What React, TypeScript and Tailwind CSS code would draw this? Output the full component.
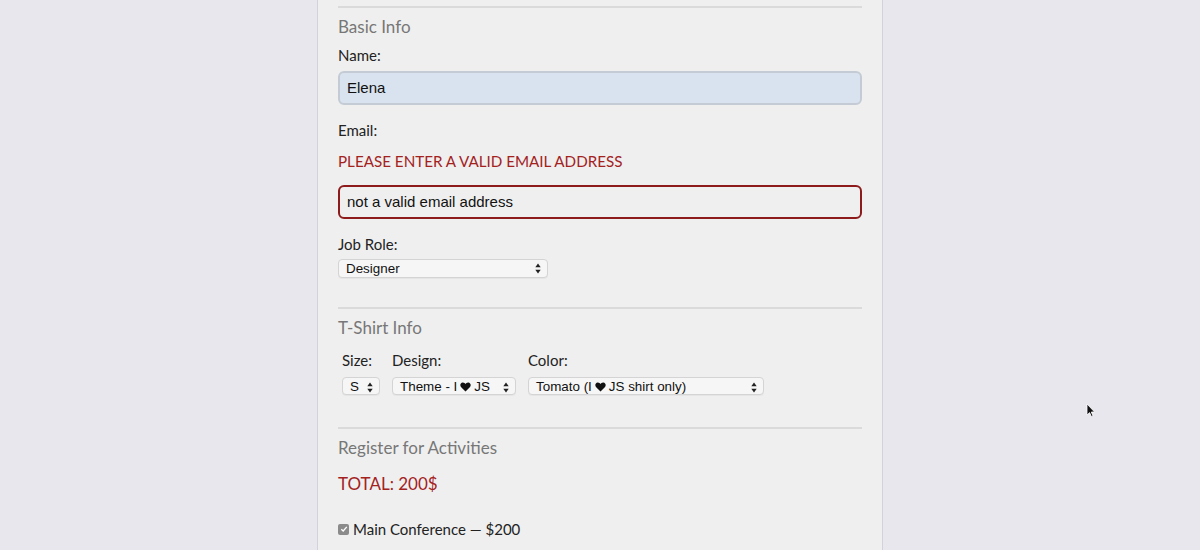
const sans = { fontFamily: 'Lato, "Open Sans", sans-serif' }

function Arrows() {
  return (
    <svg width="6" height="11" viewBox="0 0 6 11" className="shrink-0">
      <path d="M3 0.5 L5.7 4.3 L0.3 4.3 Z" fill="#222" />
      <path d="M3 10.5 L5.7 6.7 L0.3 6.7 Z" fill="#222" />
    </svg>
  )
}

function Heart() {
  return (
    <svg width="11" height="10" viewBox="0 0 11 10" className="mx-[3px] inline-block align-[-1px]">
      <path d="M5.5 9.6 L1.2 5.2 C-0.4 3.6 0.2 0.6 2.7 0.4 C4 0.3 5 1.1 5.5 2.1 C6 1.1 7 0.3 8.3 0.4 C10.8 0.6 11.4 3.6 9.8 5.2 Z" fill="#111" />
    </svg>
  )
}

function FakeSelect({ children, className }: { children: React.ReactNode; className: string }) {
  return (
    <div
      className={`flex items-center justify-between rounded-[4px] border border-[#d4d4d4] bg-[#f6f6f6] pr-[6px] text-[13.4px] leading-none text-[#111] shadow-[0_1px_0_rgba(0,0,0,0.04)] ${className}`}
      style={{ fontFamily: '"Liberation Sans", Arial, sans-serif' }}
    >
      <span className="whitespace-nowrap">{children}</span>
      <Arrows />
    </div>
  )
}

function Rule({ className = '' }: { className?: string }) {
  return <div className={`h-[2px] bg-[#dadada] ${className}`} />
}

function Title({ children, className = '' }: { children: string; className?: string }) {
  return <h2 className={`text-[17px] leading-[20px] text-[#777] ${className}`}>{children}</h2>
}

function Label({ children, className = '' }: { children: string; className?: string }) {
  return <div className={`text-[15px] leading-[20px] text-[#222] ${className}`}>{children}</div>
}

export default function App() {
  return (
    <div className="relative flex h-[550px] w-full justify-center overflow-hidden bg-[#e8e7ed]" style={sans}>
      <div className="w-[566px] border-x border-[#d3d1dc] bg-[#efefef] px-[20px]">
        <Rule className="mt-[6px]" />

        {/* Basic info */}
        <Title className="mt-[9px]">Basic Info</Title>
        <Label className="mt-[8px]">Name:</Label>
        <div
          className="mt-[6px] flex h-[34px] items-center rounded-[6px] border-2 border-[#c5cbd5] bg-[#d9e3ef] px-[7px] text-[15px] text-[#111]"
          style={{ fontFamily: '"Liberation Sans", Arial, sans-serif' }}
        >
          Elena
        </div>
        <Label className="mt-[15px]">Email:</Label>
        <div className="mt-[11px] text-[15.2px] leading-[20px] text-[#a3221e]">PLEASE ENTER A VALID EMAIL ADDRESS</div>
        <div
          className="mt-[14px] flex h-[34px] items-center rounded-[6px] border-2 border-[#8e1b1b] bg-[#efefef] px-[7px] text-[15px] text-[#111]"
          style={{ fontFamily: '"Liberation Sans", Arial, sans-serif' }}
        >
          not a valid email address
        </div>
        <Label className="mt-[15px]">Job Role:</Label>
        <FakeSelect className="mt-[5px] h-[19px] w-[210px] pl-[7px]">Designer</FakeSelect>

        {/* T-shirt */}
        <Rule className="mt-[29px]" />
        <Title className="mt-[9px]">T-Shirt Info</Title>
        <div className="mt-[12px] flex pl-[4px]">
          <div className="w-[50px]">
            <Label>Size:</Label>
            <FakeSelect className="mt-[7px] h-[18px] w-[38px] pl-[7px] pt-[2px]">S</FakeSelect>
          </div>
          <div className="w-[136px]">
            <Label>Design:</Label>
            <FakeSelect className="mt-[7px] h-[18px] w-[124px] pl-[7px] pt-[2px]">
              Theme - I<Heart />JS
            </FakeSelect>
          </div>
          <div>
            <Label>Color:</Label>
            <FakeSelect className="mt-[7px] h-[18px] w-[236px] pl-[7px] pt-[2px]">
              Tomato (I<Heart />JS shirt only)
            </FakeSelect>
          </div>
        </div>

        {/* Activities */}
        <Rule className="mt-[32px]" />
        <Title className="mt-[9px]">Register for Activities</Title>
        <div className="mt-[16px] text-[17px] leading-[20px] text-[#a3221e]">TOTAL: 200$</div>
        <div className="mt-[25px] flex items-center gap-[4px]">
          <span className="flex h-[11px] w-[11px] items-center justify-center rounded-[2px] bg-[#8b8b8b]">
            <svg width="8" height="8" viewBox="0 0 8 8">
              <path d="M1.3 4.2 L3.2 6 L6.8 1.8" stroke="#fff" strokeWidth="1.3" fill="none" />
            </svg>
          </span>
          <span className="text-[15px] leading-[20px] text-[#222]">Main Conference — $200</span>
        </div>
      </div>

      {/* mouse cursor */}
      <svg width="10" height="16" viewBox="0 0 10 16" className="absolute left-[1086px] top-[403px]">
        <path d="M1 1 L1 12 L3.6 9.6 L5.4 13.6 L7 12.9 L5.3 9 L8.6 9 Z" fill="#111" stroke="#fff" strokeWidth="0.8" />
      </svg>
    </div>
  )
}
